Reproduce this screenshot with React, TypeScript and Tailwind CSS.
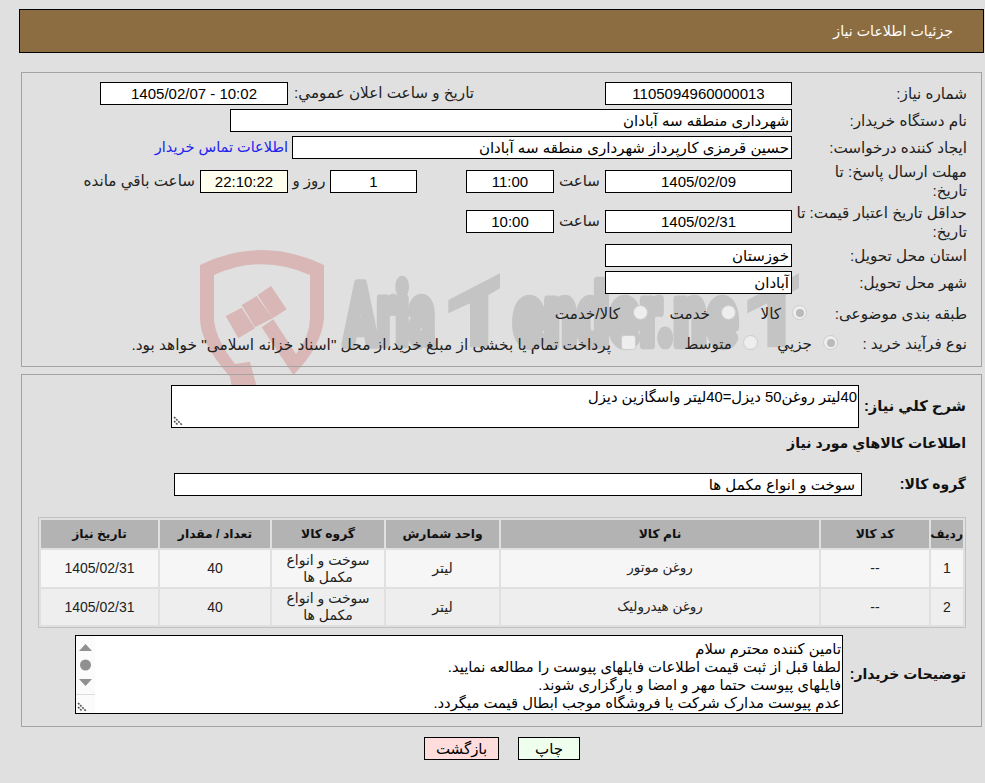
import type { ReactNode } from 'react';

const FONT = "font-['Liberation_Sans','DejaVu_Sans',sans-serif]";

function Field({ className = '', bg = 'bg-white', children }: { className?: string; bg?: string; children: ReactNode }) {
  return (
    <div className={`h-[23px] shrink-0 border border-black text-[15px] leading-[21px] text-black ${bg} ${className}`}>
      {children}
    </div>
  );
}

function Label({ children }: { children: ReactNode }) {
  return <div className="w-[175px] shrink-0 pl-[2px] text-[15.2px] leading-[19px] text-[#222]">{children}</div>;
}

function Radio({ checked }: { checked?: boolean }) {
  return (
    <span className="flex h-[15px] w-[15px] shrink-0 items-center justify-center rounded-full border border-[#cdcdcd] bg-[#eeeeee]">
      {checked && <span className="h-[8px] w-[8px] rounded-full bg-[#bababa]" />}
    </span>
  );
}

function ResizeGrip() {
  return (
    <svg className="absolute bottom-[1px] left-[1px]" width="11" height="11" viewBox="0 0 11 11">
      <path d="M1 2 L9 10 M1 6 L5 10" stroke="#555" strokeWidth="1.6" strokeDasharray="2 1" fill="none" />
    </svg>
  );
}

function Watermark() {
  return (
    <svg className="absolute left-[190px] top-[240px]" width="640" height="200" viewBox="0 0 1920 600">
      <g fill="#d9b7b7">
        <path d="M30 75 Q215 -15 402 75 L402 235 Q395 320 310 405 L215 262 L250 238 L318 342 Q360 290 360 230 L360 105 Q215 40 72 105 L72 240 Q78 300 135 372 L180 365 L200 440 L125 440 L120 410 Q30 310 30 235 Z" />
        <path d="M107 228 L155 203 L195 265 L145 295 Z" />
        <path d="M155 195 L200 168 L248 235 L195 262 Z" />
        <path d="M203 165 L243 138 L290 208 L248 235 Z" />
      </g>
      <g fill="#c4c4c4" stroke="#c4c4c4" strokeWidth="26" strokeLinejoin="round" fontFamily="Roboto, sans-serif" fontWeight="900" fontSize="256">
        <text x="462" y="312" direction="ltr" textLength="272" lengthAdjust="spacingAndGlyphs">Aria</text>
        <path d="M775 180 L930 100 L930 145 L895 165 L895 322 L840 322 L840 190 L775 220 Z" stroke="none" />
        <text x="970" y="316" direction="ltr" textLength="672" lengthAdjust="spacingAndGlyphs">ender.ne</text>
        <path d="M1672 180 L1827 100 L1827 145 L1787 165 L1787 322 L1732 322 L1732 190 L1672 220 Z" stroke="none" />
      </g>
    </svg>
  );
}

const ROWS = [
  { id: '1', name: 'روغن موتور' },
  { id: '2', name: 'روغن هیدرولیک' },
];

export default function App() {
  return (
    <div dir="rtl" className={`relative h-[783px] w-[985px] overflow-hidden bg-[#e0e0e0] ${FONT}`}>
      <Watermark />

      {/* header */}
      <div className="relative mr-[1px] ml-[19px] mt-[9px] flex h-[44px] items-center border border-black bg-[#8c6d42] pr-[30px] pt-[1px] text-[14.2px] text-white">
        جزئیات اطلاعات نیاز
      </div>

      {/* need details */}
      <div className="relative mx-[3px] ml-[21px] mt-[19px] h-[295px] border border-[#a3a3a3] pr-[14px] pt-[9px]">
        <div className="mb-[4px] flex h-[23px] items-center">
          <Label>شماره نياز:</Label>
          <Field className="w-[187px] text-center">1105094960000013</Field>
          <div className="mr-[131px] w-[186px] shrink-0 text-[15.2px] text-[#222]">تاريخ و ساعت اعلان عمومي:</div>
          <Field className="w-[188px] text-center">10:02 - 1405/02/07</Field>
        </div>
        <div className="mb-[4px] flex h-[23px] items-center">
          <Label>نام دستگاه خريدار:</Label>
          <Field className="w-[562px] pr-[2px]">شهرداری منطقه سه آبادان</Field>
        </div>
        <div className="mb-[4px] flex h-[23px] items-center">
          <Label>ايجاد کننده درخواست:</Label>
          <Field className="w-[500px] pr-[2px]">حسین قرمزی کارپرداز شهرداری منطقه سه آبادان</Field>
          <a className="mr-[4px] text-[14.5px] text-[#2222ee]">اطلاعات تماس خريدار</a>
        </div>
        <div className="flex h-[36px] items-center">
          <Label>
            مهلت ارسال پاسخ: تا
            <br />
            تاريخ:
          </Label>
          <Field className="w-[187px] text-center">1405/02/09</Field>
          <div className="w-[51px] shrink-0 text-center text-[15px] text-[#222]">ساعت</div>
          <Field className="w-[88px] text-center">11:00</Field>
          <Field className="mr-[49px] w-[87px] text-center">1</Field>
          <div className="w-[42px] shrink-0 text-center text-[15px] text-[#222]">روز و</div>
          <Field bg="bg-[#ffffee]" className="w-[88px] text-center">22:10:22</Field>
          <div className="mr-[5px] whitespace-nowrap text-[15.2px] text-[#222]">ساعت باقي مانده</div>
        </div>
        <div className="flex h-[45px] items-center">
          <Label>
            حداقل تاريخ اعتبار قيمت: تا
            <br />
            تاريخ:
          </Label>
          <Field className="w-[187px] text-center">1405/02/31</Field>
          <div className="w-[51px] shrink-0 text-center text-[15px] text-[#222]">ساعت</div>
          <Field className="w-[88px] text-center">10:00</Field>
        </div>
        <div className="mb-[4px] flex h-[23px] items-center">
          <Label>استان محل تحويل:</Label>
          <Field className="w-[187px] pr-[2px]">خوزستان</Field>
        </div>
        <div className="mb-[4px] flex h-[23px] items-center">
          <Label>شهر محل تحويل:</Label>
          <Field className="w-[187px] pr-[2px]">آبادان</Field>
        </div>
        <div className="flex h-[30px] items-center text-[15.2px] text-[#222]">
          <Label>طبقه بندی موضوعی:</Label>
          <div className="mr-[-15px] flex items-center">
            <Radio checked />
            <span className="mr-[11px] w-[45px] pt-[3px]">كالا</span>
            <Radio />
            <span className="mr-[11px] w-[62px] pt-[3px]">خدمت</span>
            <Radio />
            <span className="mr-[13px] pt-[3px]">كالا/خدمت</span>
          </div>
        </div>
        <div className="flex h-[30px] items-center text-[15.2px] text-[#222]">
          <Label>نوع فرآیند خرید :</Label>
          <div className="mr-[-46px] flex items-center">
            <Radio checked />
            <span className="mr-[11px] w-[54px] pt-[3px]">جزيي</span>
            <Radio />
            <span className="mr-[11px] w-[96px] pt-[3px]">متوسط</span>
            <span className="h-[15px] w-[15px] shrink-0 rounded-[3px] border border-[#cdcdcd] bg-[#eeeeee]" />
            <span className="mr-[10px] whitespace-nowrap pt-[3px] text-[15.4px]">پرداخت تمام يا بخشی از مبلغ خريد،از محل "اسناد خزانه اسلامی" خواهد بود.</span>
          </div>
        </div>
      </div>

      {/* goods */}
      <div className="relative mx-[3px] ml-[21px] mt-[7px] h-[353px] border border-[#a3a3a3] pr-[15px]">
        <div className="mt-[10px] flex h-[43px] items-center">
          <div className="w-[107px] shrink-0 text-[14.7px] font-bold text-[#111]">شرح کلي نياز:</div>
          <div className="relative h-[43px] w-[688px] border border-black bg-white pr-[1px] text-[14.8px] leading-[22px] text-black">
            40لیتر روغن50 دیزل=40لیتر واسگازین دیزل
            <ResizeGrip />
          </div>
        </div>
        <div className="mt-[5px] h-[20px] text-[14.1px] font-bold leading-[20px] text-[#111]">اطلاعات كالاهاي مورد نياز</div>
        <div className="mt-[20px] flex h-[23px] items-center">
          <div className="w-[104px] shrink-0 text-[14px] font-bold text-[#111]">گروه کالا:</div>
          <Field className="w-[688px] pr-[6px]">سوخت و انواع مکمل ها</Field>
        </div>

        <table className="mt-[21px] h-[110px] w-[928px] table-fixed border-separate border-spacing-[2px] border border-[#c2c2c2] text-center text-[14px] text-[#222]">
          <colgroup>
            <col className="w-[32px]" />
            <col className="w-[108px]" />
            <col className="w-[318px]" />
            <col className="w-[113px]" />
            <col className="w-[112px]" />
            <col className="w-[110px]" />
            <col className="w-[117px]" />
          </colgroup>
          <thead>
            <tr className="h-[28px] bg-[#b3b3b3] text-[12.3px] font-bold text-[#111]">
              <th>رديف</th>
              <th>کد کالا</th>
              <th>نام کالا</th>
              <th>واحد شمارش</th>
              <th>گروه کالا</th>
              <th>تعداد / مقدار</th>
              <th>تاريخ نياز</th>
            </tr>
          </thead>
          <tbody>
            {ROWS.map((r, i) => (
              <tr key={r.id} className={i === 0 ? 'h-[37px] bg-[#f6f6f6]' : 'h-[36px] bg-[#eeeeee]'}>
                <td>{r.id}</td>
                <td>--</td>
                <td className="text-[13.5px]">{r.name}</td>
                <td>لیتر</td>
                <td className="leading-[17px]">سوخت و انواع مکمل ها</td>
                <td>40</td>
                <td>1405/02/31</td>
              </tr>
            ))}
          </tbody>
        </table>

        <div className="mt-[7px] flex h-[79px] items-center">
          <div className="w-[123px] shrink-0 whitespace-nowrap text-[14px] font-bold text-[#111]">توضیحات خریدار:</div>
          <div className="relative flex h-[79px] w-[768px] border border-black bg-white">
            <div className="flex-1 pr-[1px] pt-[4px] text-[14.8px] leading-[18px] text-black">
              <div>تامین کننده محترم سلام</div>
              <div>لطفا قبل از ثبت قیمت اطلاعات فایلهای پیوست را مطالعه نمایید.</div>
              <div>فایلهای پیوست حتما مهر و امضا و بارگزاری شوند.</div>
              <div>عدم پیوست مدارک شرکت یا فروشگاه موجب ابطال قیمت میگردد.</div>
            </div>
            <div className="relative flex w-[19px] shrink-0 flex-col items-center bg-[#fbfbfb]">
              <svg className="mt-[7px]" width="13" height="60" viewBox="0 0 13 60">
                <path d="M6.5 1 L13 8 L0 8 Z" fill="#909090" />
                <circle cx="6.5" cy="22" r="5.5" fill="#909090" />
                <path d="M0 36 L13 36 L6.5 43 Z" fill="#909090" />
              </svg>
              <div className="absolute bottom-0 left-0 h-[19px] w-full border-t border-[#dcdcdc]">
                <ResizeGrip />
              </div>
            </div>
          </div>
        </div>
      </div>

      {/* actions */}
      <div className="relative mr-[405px] mt-[10px] flex items-center">
        <div className="h-[23px] w-[62px] border border-black bg-[#eeffee] text-center text-[15px] leading-[21px] text-black">چاپ</div>
        <div className="mr-[19px] h-[23px] w-[75px] border border-black bg-[#ffdddd] text-center text-[15px] leading-[21px] text-black">بازگشت</div>
      </div>
    </div>
  );
}
